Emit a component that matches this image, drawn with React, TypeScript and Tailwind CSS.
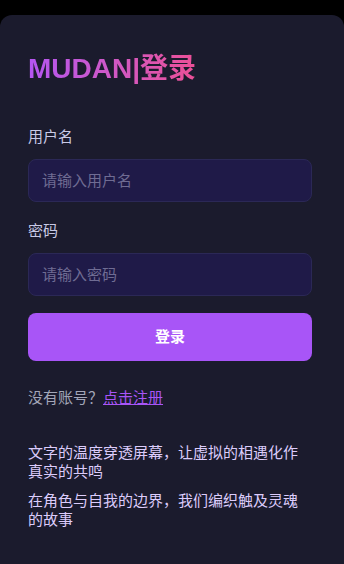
import React from "react";

const font = { fontFamily: '"Liberation Sans", "Noto Sans CJK SC", sans-serif' };

export default function App() {
  return (
    <div className="min-h-[564px] bg-black pt-[15px]" style={font}>
      <div className="min-h-[549px] rounded-t-xl bg-[#1b1b2d] pl-7 pr-8 pt-[36px] pb-8">
        <h1 className="bg-gradient-to-r from-[#b455f2] to-[#ec4f96] bg-clip-text text-[28px] font-bold leading-[36px] text-transparent w-fit">
          MUDAN|登录
        </h1>
        <div className="mt-[39px]">
          <label className="block text-[15px] leading-[22px] text-[#c9cae6]">用户名</label>
          <input
            className="mt-[11px] block h-[43px] w-full rounded-lg border border-[#2b2856] bg-[#1f1a48] px-[13px] text-[15px] text-white placeholder:text-[#6f6c93] outline-none"
            placeholder="请输入用户名"
            style={font}
          />
        </div>
        <div className="mt-[18px]">
          <label className="block text-[15px] leading-[22px] text-[#c9cae6]">密码</label>
          <input
            type="password"
            className="mt-[11px] block h-[43px] w-full rounded-lg border border-[#2b2856] bg-[#1f1a48] px-[13px] text-[15px] text-white placeholder:text-[#6f6c93] outline-none"
            placeholder="请输入密码"
            style={font}
          />
        </div>
        <button
          className="mt-[17px] block h-[48px] w-full rounded-lg bg-[#a855f7] text-[15px] font-bold text-white"
          style={font}
        >
          登录
        </button>
        <p className="mt-[26px] text-[15px] leading-[22px] text-[#a3a6b8]">
          没有账号？<a className="text-[#a855f7] underline" href="#">点击注册</a>
        </p>
        <div className="mt-[34px] flex flex-col gap-[10px] text-[15px] leading-[19px] text-[#dcccfb]">
          <p>文字的温度穿透屏幕，让虚拟的相遇化作真实的共鸣</p>
          <p>在角色与自我的边界，我们编织触及灵魂的故事</p>
        </div>
      </div>
    </div>
  );
}
